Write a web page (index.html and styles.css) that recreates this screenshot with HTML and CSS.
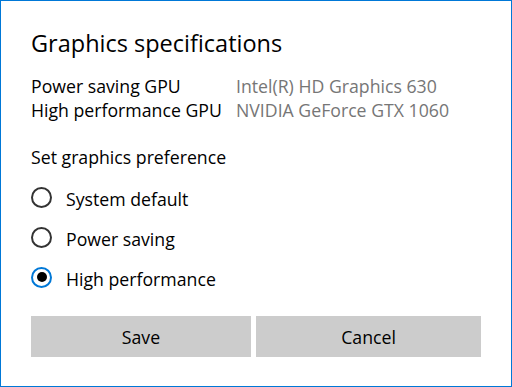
FILE: index.html
```html
<!DOCTYPE html>
<html lang="en">
<head>
<meta charset="utf-8">
<title>Graphics specifications</title>
<link rel="stylesheet" href="styles.css">
</head>
<body>
<div class="dialog">
  <h1 class="title">Graphics specifications</h1>
  <div class="specs">
    <span class="spec-name">Power saving GPU</span>
    <span class="spec-value">Intel(R) HD Graphics 630</span>
    <span class="spec-name">High performance GPU</span>
    <span class="spec-value">NVIDIA GeForce GTX 1060</span>
  </div>
  <div class="pref-label">Set graphics preference</div>
  <div class="radios">
    <label class="radio"><span class="circle"></span><span class="radio-text">System default</span></label>
    <label class="radio"><span class="circle"></span><span class="radio-text">Power saving</span></label>
    <label class="radio"><span class="circle checked"></span><span class="radio-text">High performance</span></label>
  </div>
  <div class="buttons">
    <button class="btn">Save</button>
    <button class="btn">Cancel</button>
  </div>
</div>
</body>
</html>
```
FILE: styles.css
```css
html, body {
  margin: 0;
  padding: 0;
  background: #fff;
}
body {
  font-family: "Open Sans", "Noto Sans", sans-serif;
  color: #000;
}
.dialog {
  width: 512px;
  height: 387px;
  box-sizing: border-box;
  border: 1px solid #0078d7;
  padding: 26px 0 0 30px;
}
.title {
  margin: 0;
  font-size: 23.5px;
  font-weight: 400;
  line-height: 32px;
}
.specs {
  margin-top: 15px;
  display: grid;
  grid-template-columns: 205px auto;
  font-size: 17.7px;
  line-height: 24px;
}
.spec-value {
  color: #767676;
}
.pref-label {
  margin-top: 23px;
  font-size: 17.7px;
  line-height: 24px;
}
.radios {
  margin-top: 8px;
  display: flex;
  flex-direction: column;
}
.radio {
  height: 40px;
  display: flex;
  align-items: center;
  font-size: 17.7px;
  line-height: 24px;
}
.circle {
  flex: 0 0 auto;
  width: 21px;
  height: 21px;
  box-sizing: border-box;
  border: 2px solid #333;
  border-radius: 50%;
  margin-right: 14px;
  display: flex;
  align-items: center;
  justify-content: center;
}
.circle.checked {
  border-color: #0078d7;
}
.circle.checked::after {
  content: "";
  width: 10px;
  height: 10px;
  border-radius: 50%;
  background: #000;
}
.radio-text {
  padding-top: 4px;
}
.buttons {
  margin-top: 19px;
  display: grid;
  grid-template-columns: 220px 225px;
  column-gap: 5px;
}
.btn {
  height: 41px;
  border: none;
  background: #cccccc;
  font-family: inherit;
  font-size: 17.7px;
  line-height: 24px;
  color: #000;
  padding: 0;
}
```
